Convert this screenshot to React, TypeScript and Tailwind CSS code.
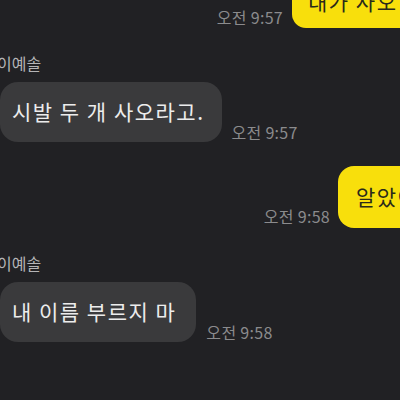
import React from "react";

const Time = ({ t, className }: { t: string; className: string }) => (
  <span className={`text-[16px] leading-none tracking-[0.3px] text-[#8b8b8d] whitespace-nowrap ${className}`}>{t}</span>
);

const Name = () => (
  <div className="-ml-[3px] text-[16px] leading-[16px] text-[#b4b4b6]">이예솔</div>
);

const App = () => {
  return (
    <div className="w-[400px] h-[400px] overflow-hidden bg-[#212124] font-['Noto_Sans_CJK_KR',sans-serif]">
      <div className="flex flex-col">
        {/* my message, cut at top */}
        <div className="flex items-end justify-end h-[28px]">
          <Time t="오전 9:57" className="mb-[3px] mr-[9px]" />
          <div className="h-[60px] -mt-[32px] w-[130px] -mr-[22px] shrink-0 rounded-[14px] bg-[#f8df0c] flex items-center pl-4 pt-2 text-[21px] tracking-[1.5px] text-[#2a2a1a] whitespace-nowrap">
            내가 사오
          </div>
        </div>

        <div className="mt-[27px]">
          <Name />
        </div>
        <div className="flex items-end mt-[11px]">
          <div className="h-[60px] flex items-center pl-3 pr-[17px] rounded-[18px] bg-[#3a3a3c] text-[21px] tracking-[1.5px] text-[#ececec] whitespace-nowrap">
            시발 두 개 사오라고.
          </div>
          <Time t="오전 9:57" className="ml-[10px] mb-[2px]" />
        </div>

        <div className="flex items-end justify-end mt-[24px]">
          <Time t="오전 9:58" className="mr-[8px] mb-[4px]" />
          <div className="h-[62px] w-[100px] -mr-[38px] shrink-0 rounded-[16px] bg-[#f8df0c] flex items-center pl-[18px] text-[21px] tracking-[1.5px] text-[#2a2a1a] whitespace-nowrap">
            알았어
          </div>
        </div>

        <div className="mt-[27px]">
          <Name />
        </div>
        <div className="flex items-end mt-[11px]">
          <div className="h-[60px] flex items-center pl-3 pr-[20px] rounded-[18px] bg-[#3a3a3c] text-[21px] tracking-[1.5px] text-[#ececec] whitespace-nowrap">
            내 이름 부르지 마
          </div>
          <Time t="오전 9:58" className="ml-[10px] mb-[2px]" />
        </div>
      </div>
    </div>
  );
};

export default App;
